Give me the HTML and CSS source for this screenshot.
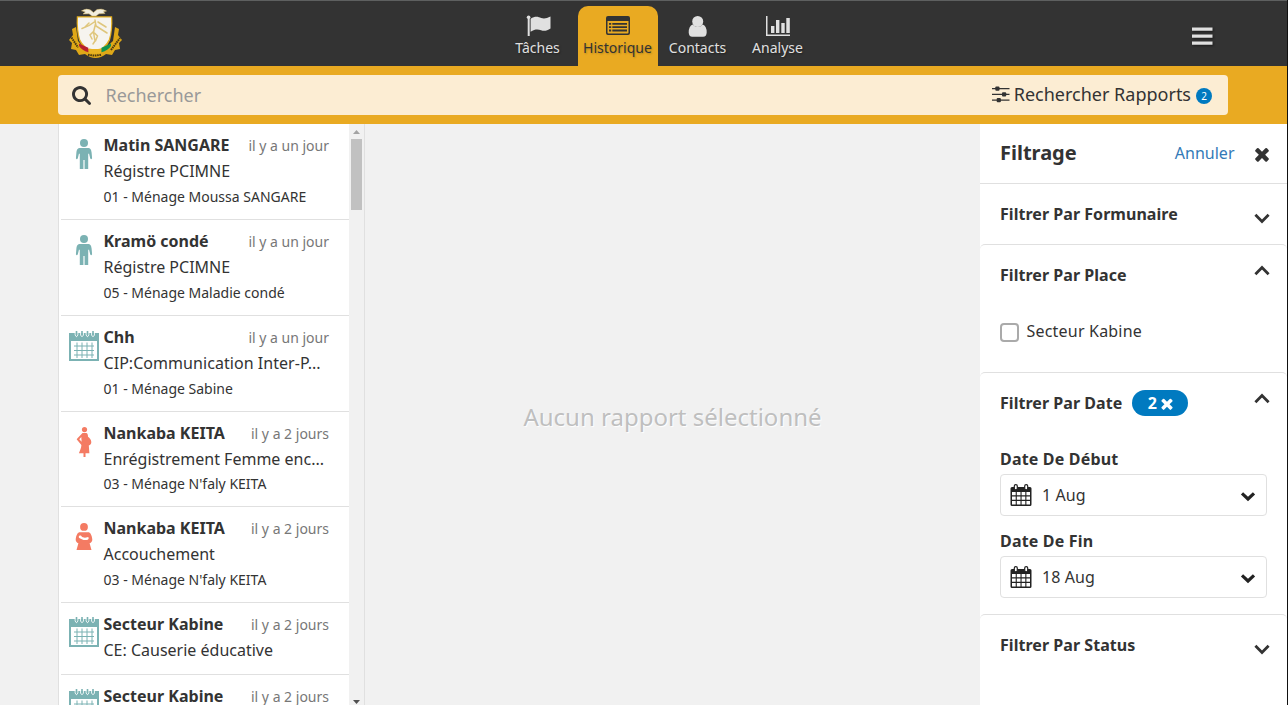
FILE: index.html
```html
<!DOCTYPE html>
<html lang="fr">
<head>
<meta charset="utf-8">
<title>Historique</title>
<link rel="stylesheet" href="styles.css">
</head>
<body>
<svg class="sprite" aria-hidden="true">
  <symbol id="person" viewBox="0 0 30 30">
    <circle cx="15" cy="4" r="4"/>
    <path d="M11.500 9h7c3.200 0 3.800 2 4.100 4.600l.5 5.700q-.9 1.700-1.900 0L20 14.500l-.8.500V30h-3.600v-9h-1.200v9h-3.600V15l-.8-.5-1.200 4.800q-1 1.700-1.900 0l.5-5.700C7.700 11 8.300 9 11.500 9z"/>
  </symbol>
  <symbol id="calendar" viewBox="0 0 30 30">
    <path fill-rule="evenodd" d="M0 2h30v28H0zM2 10v18h26V10z"/>
    <path d="M6.200 0v4q1.300 3.200 2.600 0V0M11.700 0v4q1.300 3.200 2.600 0V0M17.200 0v4q1.300 3.200 2.600 0V0M22.700 0v4q1.300 3.200 2.600 0V0" fill="none" stroke="#fff" stroke-width="1"/>
    <path d="M6.700 0h1.600v4.500H6.700zM12.200 0h1.600v4.500h-1.600zM17.700 0h1.600v4.500h-1.600zM23.200 0h1.600v4.500h-1.600z"/>
    <path d="M8 11.500V27M13 11.500V27M18 11.500V27M23 11.500V27M5 15h20M5 19.500h20M5 24h20" fill="none" stroke="currentColor" stroke-width="1"/>
  </symbol>
  <symbol id="pregnant" viewBox="0 0 30 30">
    <circle cx="15.500" cy="2.600" r="2.600"/>
    <path fill-rule="evenodd" d="M13.500 6h3.500c1.700 0 2 1.800 2 3.800 1.700 1.300 3.200 2.900 3.300 5.200.1 1.900-1 3.200-2.500 3.400l.6 7.900h-3.900V30h-2v-3.700H9.900c1-2.700 2.400-5 2.500-8.300L8 12.800c-.4-.6-.1-1 .5-1.600zM12.300 10l-2 2.200 2.300 2.600z"/>
  </symbol>
  <symbol id="delivery" viewBox="0 0 30 30">
    <circle cx="15" cy="4.900" r="3.900"/>
    <path fill-rule="evenodd" d="M11 10.300h8c2.500 0 3.700 2.700 4.300 7 .1 2-1 3.500-2.700 4L22.500 28h-15l1.900-6.700c-1.700-.5-2.800-2-2.700-4 .6-4.300 1.800-7 4.300-7zM10.300 13.700c1.200-.6 2.400 0 2.700 1.300l3 .7 3.200-.6c1.100 1.300.3 2.900-1.700 3h-3l-3.300-1.700c-1.500-.4-1.900-1.900-.9-2.700z"/>
  </symbol>
  <symbol id="times" viewBox="290 290 1212 1276">
    <path d="M1490 1322q0 40-28 68l-136 136q-28 28-68 28t-68-28l-294-294-294 294q-28 28-68 28t-68-28l-136-136q-28-28-28-68t28-68l294-294-294-294q-28-28-28-68t28-68l136-136q28-28 68-28t68 28l294 294 294-294q28-28 68-28t68 28l136 136q28 28 28 68t-28 68l-294 294 294 294q28 28 28 68z"/>
  </symbol>
  <symbol id="down" viewBox="0 0 16 12">
    <path d="M1.400 2.800 8 9.400 14.600 2.800" fill="none" stroke="currentColor" stroke-width="2.800"/>
  </symbol>
  <symbol id="down-bold" viewBox="0 0 16 12">
    <path d="M2 3.400 8 9l6-5.600" fill="none" stroke="currentColor" stroke-width="3.200"/>
  </symbol>
  <symbol id="datepick" viewBox="0 0 22 22">
    <path fill-rule="evenodd" d="M2 3h18q1.500 0 1.500 1.500v16Q21.500 22 20 22H2Q.5 22 .5 20.500v-16Q.5 3 2 3zM2 8v3.300h3.700V8zm4.800 0v3.300h3.700V8zm4.800 0v3.300h3.700V8zm4.800 0v3.300H20V8zM2 12.400v3.400h3.700v-3.400zm4.800 0v3.400h3.700v-3.400zm4.800 0v3.400h3.700v-3.400zm4.800 0v3.400H20v-3.400zM2 16.900v3.600h3.700v-3.600zm4.800 0v3.600h3.700v-3.600zm4.800 0v3.600h3.700v-3.600zm4.800 0v3.600H20v-3.600z"/>
    <rect x="4.300" y=".6" width="3" height="5.200" rx="1.400" fill="#fff" stroke="currentColor" stroke-width="1.200"/>
    <rect x="14.700" y=".6" width="3" height="5.200" rx="1.400" fill="#fff" stroke="currentColor" stroke-width="1.200"/>
  </symbol>
</svg>

<div class="app">
  <header class="header">
    <svg class="logo" viewBox="0 0 56 52">
      <path d="M8 19l-4 2 1 6-4 5 3 3-1 6 5 1 3 5 6-1q5 4 10.500 4T38 46l6 1 3-5 5-1-1-6 3-3-4-5 1-6-4-2-2 14-10 9H18L10 33z" fill="#dfa817"/>
      <path d="M8.800 8.300h35.400q.8 14-2.200 24-4 10-15.500 14Q15 42 11 32.300 8 22 8.800 8.300z" fill="#e3ae20"/>
      <path d="M10 9.500h33q.7 13-2.200 22-4 8.500-14.300 12.500Q16 40 12.200 31.500 9.300 22 10 9.500z" fill="#f6f4ef"/>
      <path d="M11 35.500l9.300 4.300v4.400Q14 42.500 11 38z" fill="#b9202c"/>
      <path d="M21 40.500q6 1.200 12 0V45q-6 1.500-12 0z" fill="#e8b322"/>
      <path d="M33.500 39.800l9.500-4.300V38q-3 4.500-9.500 6.200z" fill="#0f9450"/>
      <path d="M13.500 2.800q5-3 9-.8l3 2.500 3.500-3q5-1.500 9.500 1.600l-3 .6 1.500 1.800-6 .3-3 2.200h-4l-3-2.200-6 .2 2.300-2z" fill="#f1eddf" stroke="#d6b867" stroke-width=".5"/>
      <path d="M14 20.500q7-2 13-7M27 12l1 6 11 7M30 14l8 5M27.500 16l-2 8 1.500 9-2 3M26 23l-4 4 2 4M26.500 25l3 3-2 5M17 19l4-4" fill="none" stroke="#dfc67c" stroke-width="1.500" stroke-linecap="round"/>
      <path d="M3.500 29.500l6.500 10M20 46.700q6.500 1.500 13 0M43 42l9-12" fill="none" stroke="#4a3911" stroke-width="2" stroke-dasharray="1.600 .7"/>
    </svg>
    <nav class="tabs">
      <a class="tab">
        <svg viewBox="0 0 26 24"><path d="M1.700 3h2V22h-2zM4.600 4.700c5-3.200 8-1.600 10.500-.7 3 1 5.500.5 9.400-1.500v12c-3.400 2.300-6.400 2.900-9.400 1.800-3-1.200-6-1.500-10.500 1.400z"/><circle cx="2.600" cy="3.300" r="1.800"/></svg>
        <span>Tâches</span>
      </a>
      <a class="tab tab-active">
        <svg viewBox="0 0 26 24"><path fill-rule="evenodd" d="M3 2h20q2 0 2 2v15q0 2-2 2H3q-2 0-2-2V4q0-2 2-2zM2.500 7v11.500q0 1 1 1h19q1 0 1-1V7zM4 9h2.200v1.800H4zM7.300 9H22v1.800H7.300zM4 12.300h2.200v1.800H4zM7.300 12.300H22v1.800H7.300zM4 15.600h2.200v1.800H4zM7.300 15.600H22v1.800H7.300z"/></svg>
        <span>Historique</span>
      </a>
      <a class="tab">
        <svg viewBox="0 0 26 24"><circle cx="12.700" cy="7.500" r="5.500"/><path d="M7.700 10.500q5 5 10 0 4 1.500 4 8-.2 4.200-3.600 4.200H7.300q-3.400 0-3.600-4.200 0-6.500 4-8z"/></svg>
        <span>Contacts</span>
      </a>
      <a class="tab">
        <svg viewBox="0 0 26 24"><path d="M1 2h1.500v18.500H25V22H1zM6 12h3.400v7H6zM11 6h3.400v13H11zM16.300 9h3.400v10h-3.400zM21.300 4h3.500v15h-3.500z"/></svg>
        <span>Analyse</span>
      </a>
    </nav>
    <svg class="burger" viewBox="0 0 22 18"><path d="M1 .5h20.500v3.300H1zM1 7.500h20.500v3.300H1zM1 14.500h20.500v3.300H1z"/></svg>
  </header>

  <div class="searchbar">
    <div class="search">
      <svg class="magnifier" viewBox="64 128 1664 1664"><path d="M1216 832q0-185-131.500-316.500t-316.500-131.500-316.500 131.500-131.500 316.500 131.500 316.500 316.500 131.500 316.500-131.500 131.500-316.500zm512 832q0 52-38 90t-90 38q-54 0-90-38l-343-342q-179 124-399 124-143 0-273.500-55.500t-225-150-150-225-55.500-273.500 55.500-273.500 150-225 225-150 273.500-55.500 273.500 55.500 225 150 150 225 55.500 273.500q0 220-124 399l343 343q37 37 37 90z"/></svg>
      <span class="placeholder">Rechercher</span>
      <svg class="sliders" viewBox="0 0 18 17"><path d="M0 2h17.500v1.300H0zM0 7.700h17.500V9H0zM0 13.400h17.500v1.300H0z"/><rect x="3.300" y=".5" width="4.200" height="4.200" rx="1"/><rect x="10" y="6.200" width="4.200" height="4.200" rx="1"/><rect x="4.700" y="12" width="4.200" height="4.200" rx="1"/></svg>
      <span class="filter-label">Rechercher Rapports</span>
      <span class="count">2</span>
    </div>
  </div>

  <main class="content">
    <section class="inbox">
      <ul class="list">
        <li class="item"><svg class="teal"><use href="#person"/></svg><div class="text"><div class="top"><b>Matin SANGARE</b><time>il y a un jour</time></div><p>Régistre PCIMNE</p><small>01 - Ménage Moussa SANGARE</small></div></li>
        <li class="item"><svg class="teal"><use href="#person"/></svg><div class="text"><div class="top"><b>Kramö condé</b><time>il y a un jour</time></div><p>Régistre PCIMNE</p><small>05 - Ménage Maladie condé</small></div></li>
        <li class="item"><svg class="teal"><use href="#calendar"/></svg><div class="text"><div class="top"><b>Chh</b><time>il y a un jour</time></div><p class="spaced">CIP:Communication Inter-P...</p><small>01 - Ménage Sabine</small></div></li>
        <li class="item item-tight"><svg class="coral"><use href="#pregnant"/></svg><div class="text"><div class="top"><b>Nankaba KEITA</b><time>il y a 2 jours</time></div><p>Enrégistrement Femme enc...</p><small>03 - Ménage N'faly KEITA</small></div></li>
        <li class="item"><svg class="coral"><use href="#delivery"/></svg><div class="text"><div class="top"><b>Nankaba KEITA</b><time>il y a 2 jours</time></div><p>Accouchement</p><small>03 - Ménage N'faly KEITA</small></div></li>
        <li class="item item-short"><svg class="teal"><use href="#calendar"/></svg><div class="text"><div class="top"><b>Secteur Kabine</b><time>il y a 2 jours</time></div><p>CE: Causerie éducative</p></div></li>
        <li class="item item-short"><svg class="teal"><use href="#calendar"/></svg><div class="text"><div class="top"><b>Secteur Kabine</b><time>il y a 2 jours</time></div></div></li>
      </ul>
      <div class="scrollbar">
        <svg viewBox="0 0 7 4"><path d="M0 4 3.500 0 7 4z" fill="#a3a3a3"/></svg>
        <div class="thumb"></div>
        <svg class="scroll-down" viewBox="0 0 7 4"><path d="M0 0h7L3.500 4z" fill="#505050"/></svg>
      </div>
    </section>

    <section class="empty">Aucun rapport sélectionné</section>

    <aside class="filters">
      <div class="filters-head"><h2>Filtrage</h2><a class="reset">Annuler</a><svg class="close"><use href="#times"/></svg></div>
      <div class="group"><div class="group-head"><h3>Filtrer Par Formunaire</h3><svg class="chevron"><use href="#down"/></svg></div></div>
      <div class="group group-place">
        <div class="group-head"><h3>Filtrer Par Place</h3><svg class="chevron up"><use href="#down"/></svg></div>
        <label class="check"><span class="box"></span>Secteur Kabine</label>
      </div>
      <div class="group group-date">
        <div class="group-head"><h3>Filtrer Par Date</h3><span class="chip">2<svg><use href="#times"/></svg></span><svg class="chevron up"><use href="#down"/></svg></div>
        <h4>Date De Début</h4>
        <div class="field"><svg class="cal"><use href="#datepick"/></svg><span>1 Aug</span><svg class="caret"><use href="#down-bold"/></svg></div>
        <h4>Date De Fin</h4>
        <div class="field"><svg class="cal"><use href="#datepick"/></svg><span>18 Aug</span><svg class="caret"><use href="#down-bold"/></svg></div>
      </div>
      <div class="group"><div class="group-head"><h3>Filtrer Par Status</h3><svg class="chevron"><use href="#down"/></svg></div></div>
    </aside>
  </main>
</div>
</body>
</html>
```

FILE: styles.css
```css
* { box-sizing: border-box; }
body {
  margin: 0;
  font: 16px/26px "Noto Sans", sans-serif;
  color: #333;
  background: #111;
  overflow: hidden;
}
h2, h3, h4, p, ul { margin: 0; padding: 0; }
svg { display: block; flex: none; fill: currentColor; }
.sprite { position: absolute; width: 0; height: 0; }

.app {
  width: 1287px;
  height: 705px;
  display: flex;
  flex-direction: column;
  background: #f1f1f1;
}

.header {
  flex: none;
  height: 66px;
  display: grid;
  grid-template-columns: 498px 320px 1fr;
  border-top: 1px solid #5e6060;
  background: #333;
  color: #e0e0e0;
}
.logo { width: 56px; height: 52px; margin: 7px 0 0 68px; }
.tabs { display: flex; padding-top: 5px; }
.tab {
  width: 80px;
  display: flex;
  flex-direction: column;
  align-items: center;
  padding-top: 8px;
  font-size: 14px;
  line-height: 20px;
  text-shadow: 1px 1px 2px rgba(0, 0, 0, .4);
}
.tab span { margin-left: -1px; }
.tab svg { width: 26px; height: 24px; }
.tab:first-child svg { margin-left: 2px; }
.tab-active {
  border-radius: 10px 10px 0 0;
  background: #e9aa22;
  color: #333;
  text-shadow: 1px 1px 2px rgba(0, 0, 0, .22);
}
.burger {
  width: 22px;
  height: 18px;
  margin: 26px 0 0 373px;
  filter: drop-shadow(1px 1px 1px rgba(0, 0, 0, .5));
}

.searchbar {
  flex: none;
  height: 58px;
  padding: 9px 59px 9px 58px;
  background: #e9aa22;
}
.search {
  height: 40px;
  display: flex;
  align-items: center;
  padding: 0 16px 0 14px;
  border-radius: 4px;
  background: #fcedd3;
  font-size: 18px;
}
.magnifier { width: 19px; height: 19px; margin: 1px 14.5px 0 0; }
.placeholder { flex: 1; color: #999; }
.sliders { width: 18px; height: 17px; margin: -1px 4px 0 0; }
.filter-label { margin-top: -2px; }
.count {
  width: 16px;
  height: 16px;
  margin: 2px 0 0 5px;
  border-radius: 50%;
  background: #007ac0;
  color: #fff;
  font-size: 10px;
  line-height: 16px;
  text-align: center;
}

.content { flex: 1; min-height: 0; display: flex; }
.inbox {
  width: 307px;
  margin-left: 58px;
  display: flex;
  border: solid #e0e0e0;
  border-width: 0 1px;
}
.list { width: 290px; list-style: none; overflow: hidden; background: #fff; padding-left: 2px; }
.item {
  height: 96px;
  display: flex;
  padding: 8px 20px 0 8px;
  border-bottom: 1px solid #e0e0e0;
}
.item > svg { width: 30px; height: 30px; margin: 7px 4.500px 0 0; }
.item-tight { height: 95px; }
.item-tight small { margin-top: -1px; }
.item-short { height: 72px; }
.item-short > svg { margin-top: 6px; }
.teal { color: #7bb2b3; }
.coral { color: #f47b63; }
.text { flex: 1; min-width: 0; white-space: nowrap; }
.spaced { letter-spacing: .05px; }
.top { display: flex; justify-content: space-between; }
.top time { font-size: 14px; line-height: 28px; height: 26px; color: #777; }
.item small { display: block; font-size: 14px; }
.scrollbar {
  width: 15px;
  display: flex;
  flex-direction: column;
  align-items: center;
  padding-top: 6px;
  background: #f1f1f1;
}
.scrollbar svg { width: 7px; height: 4px; }
.thumb { width: 11px; height: 71px; margin-top: 5px; background: #c1c1c1; }
.scrollbar .scroll-down { margin-top: auto; margin-bottom: 1px; }

.empty {
  flex: 1;
  display: flex;
  align-items: center;
  justify-content: center;
  padding-top: 5px;
  font-size: 24px;
  line-height: 34px;
  color: #bfbfbf;
  text-shadow: 1px 1px 1px #fff;
}

.filters { width: 307px; background: #fff; }
.filters-head {
  height: 60px;
  display: flex;
  align-items: center;
  padding: 0 18px 1px 20px;
  border-bottom: 1px solid #e0e0e0;
}
.filters-head h2 { flex: 1; font-size: 20px; line-height: 26px; }
.reset { color: #337ab7; }
.close { width: 14px; height: 15px; margin: 3px 0 0 20.500px; }
.group { padding: 0 17.500px 0 20px; }
.group + .group { border-top: 1px solid #e0e0e0; border-radius: 5px 5px 0 0; }
.group-head { height: 60px; display: flex; align-items: center; }
.group h3, .group h4 { font-size: 16px; line-height: 26px; }
.group h3 { letter-spacing: .04px; }
.group h4 { letter-spacing: .18px; }
.chevron { width: 16px; height: 12px; margin: 8px 0 0 auto; }
.chevron.up { margin: 0 0 8px auto; transform: rotate(180deg); }
.group-place { height: 128px; }
.group-date { height: 242px; }
.check { display: flex; align-items: center; margin-top: 13px; letter-spacing: .2px; }
.box {
  width: 19px;
  height: 19px;
  margin: 2px 7.500px 0 0;
  border: 2px solid #aaa;
  border-radius: 4px;
}
.chip {
  display: flex;
  align-items: center;
  justify-content: center;
  gap: 4px;
  width: 56px;
  height: 26px;
  margin-left: 10px;
  border-radius: 13px;
  background: #007ac0;
  color: #fff;
  font-weight: 700;
}
.chip svg { width: 12px; height: 12px; margin-top: 2px; }
.group-date h4 { margin-top: 13px; }
.field {
  width: 267px;
  height: 42px;
  display: flex;
  align-items: center;
  margin-top: 2px;
  padding: 0 10px 0 9px;
  border: 1px solid #e0e0e0;
  border-radius: 4px;
}
.field svg { color: #222; }
.field span { letter-spacing: .1px; }
.field + h4 { margin-top: 12px; }
.cal { width: 22px; height: 22px; margin-right: 10px; }
.caret { width: 16px; height: 12px; margin: 2px 0 0 auto; }
```
